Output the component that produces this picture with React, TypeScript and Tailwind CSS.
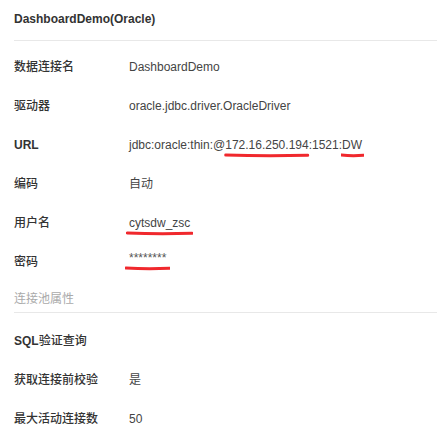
import React from "react";

const Red = ({ className }: { className: string }) => (
  <svg
    className={"absolute pointer-events-none " + className}
    viewBox="0 0 100 6"
    preserveAspectRatio="none"
    height="6"
  >
    <path d="M2 3 Q 50 4.2 98 3.2" stroke="#f0282d" strokeWidth="3" strokeLinecap="round" fill="none" vectorEffect="non-scaling-stroke" />
  </svg>
);

const Row = ({ label, children }: { label: React.ReactNode; children?: React.ReactNode }) => (
  <div className="flex h-[39px] items-center">
    <div className="w-[115px] shrink-0 font-medium text-[#333]">{label}</div>
    <div className="text-[#444]">{children}</div>
  </div>
);

export default function App() {
  return (
    <div
      className="w-[437px] h-[443px] bg-white pl-[14px] text-[12px] leading-[17px] overflow-hidden"
      style={{ fontFamily: '"Liberation Sans", Arial, "Noto Sans CJK SC", sans-serif' }}
    >
      <div className="h-[41px] flex items-center border-b border-[#e8e8e8] font-bold text-[#333] pb-[1px]">
        DashboardDemo(Oracle)
      </div>
      <div className="pt-[7px]">
        <Row label="数据连接名">DashboardDemo</Row>
        <Row label="驱动器">oracle.jdbc.driver.OracleDriver</Row>
        <Row label={<span className="font-bold">URL</span>}>
          jdbc:oracle:thin:@
          <span className="relative">
            172.16.250.194
            <Red className="left-[-1px] right-[-1px] top-[14px] w-[calc(100%+2px)]" />
          </span>
          :1521:
          <span className="relative">
            DW
            <Red className="left-[-1px] top-[14px] w-[calc(100%+3px)]" />
          </span>
        </Row>
        <Row label="编码">自动</Row>
        <Row label="用户名">
          <span className="relative">
            cytsdw_zsc
            <Red className="left-[-3px] top-[14px] w-[calc(100%+6px)]" />
          </span>
        </Row>
        <Row label="密码">
          <span className="relative">
            <span className="relative top-[-4px] text-[#555]">********</span>
            <Red className="left-[-4px] top-[10px] w-[calc(100%+8px)]" />
          </span>
        </Row>
      </div>
      <div className="h-[31px] flex items-end pb-[4px] border-b border-[#e8e8e8] text-[#aaa]">连接池属性</div>
      <div className="pt-[9px]">
        <Row label={<><span className="font-bold">SQL</span>验证查询</>} />
        <Row label="获取连接前校验">是</Row>
        <Row label="最大活动连接数">50</Row>
      </div>
    </div>
  );
}
